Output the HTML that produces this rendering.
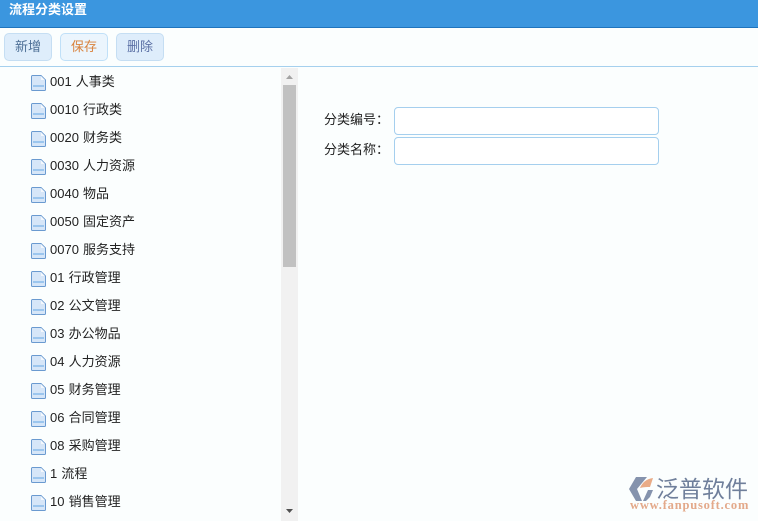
<!DOCTYPE html>
<html lang="zh"><head><meta charset="utf-8">
<style>
*{box-sizing:border-box;margin:0;padding:0}
html,body{width:758px;height:521px;overflow:hidden;background:#fbfefe;font-family:"Liberation Sans","Microsoft YaHei","Noto Sans CJK SC",sans-serif;color:#222}
.abs{position:absolute}
#hd{left:0;top:0;width:758px;height:28px;background:#3b96df;border-bottom:1px solid #1f74bd;color:#fff;font-weight:bold;font-size:13px;line-height:19px;padding-left:9px}
#tb{left:0;top:28px;width:758px;height:39px;background:#fbfefe;border-bottom:1px solid #a5d0ee}
.btn{position:absolute;top:33px;width:48px;height:28px;border:1px solid #c5def3;border-radius:5px;background:#deedfb;font-size:13px;line-height:26px;text-align:center}
.row{position:absolute;left:0;width:281px;height:28px}
.row svg{position:absolute;left:31px;top:7px}
.row span{position:absolute;left:50px;top:5px;font-size:13px;line-height:18px;color:#222;white-space:nowrap;word-spacing:.5px}
#sb{left:281px;top:68px;width:17px;height:453px;background:#f1f1f1}
#th{left:283px;top:85px;width:13px;height:182px;background:#c1c1c1}
.lb{position:absolute;left:324px;font-size:13px;line-height:18px;color:#222;white-space:nowrap}
.in{position:absolute;left:394px;width:265px;height:28px;border:1px solid #a5cfee;border-radius:4px;background:#fff}
</style></head><body>
<div id="hd" class="abs">流程分类设置</div>
<div id="tb" class="abs"></div>
<div class="btn" style="left:4px;color:#4d6f96">新增</div>
<div class="btn" style="left:60px;color:#d9823c;background:#ebf5fd;border-color:#c0e0f8">保存</div>
<div class="btn" style="left:116px;color:#5b70a5">删除</div>
<svg width="0" height="0" style="position:absolute"><symbol id="f" viewBox="0 0 15 16"><path d="M.5 1.5a1 1 0 0 1 1-1h8.5l4.500 4.500v9.500a1 1 0 0 1-1 1h-12a1 1 0 0 1-1-1z" fill="#d6e6f8" stroke="#6a9ad0"/><path d="M10 1v4h4z" fill="#f4f8fd"/><rect x="2" y="10" width="11" height="2" fill="#9cc6ee"/></symbol></svg>

<div class="row" style="top:68px"><svg width="15" height="16"><use href="#f"/></svg><span>001 人事类</span></div>
<div class="row" style="top:96px"><svg width="15" height="16"><use href="#f"/></svg><span>0010 行政类</span></div>
<div class="row" style="top:124px"><svg width="15" height="16"><use href="#f"/></svg><span>0020 财务类</span></div>
<div class="row" style="top:152px"><svg width="15" height="16"><use href="#f"/></svg><span>0030 人力资源</span></div>
<div class="row" style="top:180px"><svg width="15" height="16"><use href="#f"/></svg><span>0040 物品</span></div>
<div class="row" style="top:208px"><svg width="15" height="16"><use href="#f"/></svg><span>0050 固定资产</span></div>
<div class="row" style="top:236px"><svg width="15" height="16"><use href="#f"/></svg><span>0070 服务支持</span></div>
<div class="row" style="top:264px"><svg width="15" height="16"><use href="#f"/></svg><span>01 行政管理</span></div>
<div class="row" style="top:292px"><svg width="15" height="16"><use href="#f"/></svg><span>02 公文管理</span></div>
<div class="row" style="top:320px"><svg width="15" height="16"><use href="#f"/></svg><span>03 办公物品</span></div>
<div class="row" style="top:348px"><svg width="15" height="16"><use href="#f"/></svg><span>04 人力资源</span></div>
<div class="row" style="top:376px"><svg width="15" height="16"><use href="#f"/></svg><span>05 财务管理</span></div>
<div class="row" style="top:404px"><svg width="15" height="16"><use href="#f"/></svg><span>06 合同管理</span></div>
<div class="row" style="top:432px"><svg width="15" height="16"><use href="#f"/></svg><span>08 采购管理</span></div>
<div class="row" style="top:460px"><svg width="15" height="16"><use href="#f"/></svg><span>1 流程</span></div>
<div class="row" style="top:488px"><svg width="15" height="16"><use href="#f"/></svg><span>10 销售管理</span></div>

<div id="sb" class="abs"></div>
<div id="th" class="abs"></div>
<svg class="abs" style="left:285px;top:74px" width="9" height="6"><path d="M4.500 1 8 5H1z" fill="#a3a3a3"/></svg>
<svg class="abs" style="left:285px;top:508px" width="9" height="6"><path d="M1 1h7L4.500 5z" fill="#505050"/></svg>

<div class="lb" style="top:111px">分类编号：</div>
<div class="in" style="top:107px"></div>
<div class="lb" style="top:141px">分类名称：</div>
<div class="in" style="top:137px"></div>

<svg class="abs" style="left:628px;top:476px" width="27" height="27" viewBox="0 0 27 27">
<path d="M8 1h11L9 13l5 12H8L1 13z" fill="#8593ad"/>
<path d="M12 12C14 7 18 3 25 2l-3 9c-3 0-6 0-10 1z" fill="#e9ab86"/>
<path d="M15 25l5-11h5l-3 7-4 4z" fill="#8593ad"/>
</svg>
<div class="abs" style="left:656px;top:474px;font-size:23px;line-height:27px;color:#6f7f9b;letter-spacing:0;white-space:nowrap;font-family:'Noto Sans CJK SC',sans-serif">泛普软件</div>
<div class="abs" style="left:630px;top:498px;font-size:12.500px;line-height:14px;font-weight:bold;color:#e3a98a;letter-spacing:.8px;white-space:nowrap;font-family:'Liberation Serif',serif">www.fanpusoft.com</div>
</body></html>
